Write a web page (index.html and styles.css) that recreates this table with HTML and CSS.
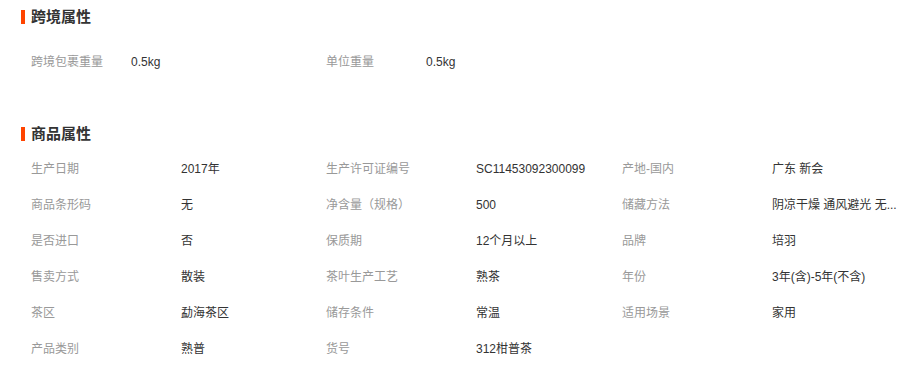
FILE: index.html
```html
<!DOCTYPE html>
<html lang="zh-CN">
<head>
<meta charset="utf-8">
<link rel="stylesheet" href="styles.css">
</head>
<body>
<div class="page">
  <section class="sec sec-cross">
    <h3 class="sec-title"><span class="bar"></span>跨境属性</h3>
    <div class="cross-row">
      <span class="c-label">跨境包裹重量</span>
      <span class="c-value c-value-wide">0.5kg</span>
      <span class="c-label">单位重量</span>
      <span class="c-value">0.5kg</span>
    </div>
  </section>
  <section class="sec sec-goods">
    <h3 class="sec-title"><span class="bar"></span>商品属性</h3>
    <div class="attr-grid">
      <span class="label">生产日期</span><span class="value">2017年</span>
      <span class="label">生产许可证编号</span><span class="value">SC11453092300099</span>
      <span class="label">产地-国内</span><span class="value">广东 新会</span>

      <span class="label">商品条形码</span><span class="value">无</span>
      <span class="label">净含量（规格）</span><span class="value">500</span>
      <span class="label">储藏方法</span><span class="value">阴凉干燥 通风避光 无...</span>

      <span class="label">是否进口</span><span class="value">否</span>
      <span class="label">保质期</span><span class="value">12个月以上</span>
      <span class="label">品牌</span><span class="value">培羽</span>

      <span class="label">售卖方式</span><span class="value">散装</span>
      <span class="label">茶叶生产工艺</span><span class="value">熟茶</span>
      <span class="label">年份</span><span class="value">3年(含)-5年(不含)</span>

      <span class="label">茶区</span><span class="value">勐海茶区</span>
      <span class="label">储存条件</span><span class="value">常温</span>
      <span class="label">适用场景</span><span class="value">家用</span>

      <span class="label">产品类别</span><span class="value">熟普</span>
      <span class="label">货号</span><span class="value">312柑普茶</span>
    </div>
  </section>
</div>
</body>
</html>
```
FILE: styles.css
```css
html, body {
  margin: 0;
  padding: 0;
  background: #fff;
}
body {
  font-family: "Liberation Sans", "Noto Sans CJK SC", sans-serif;
  font-size: 12px;
  color: #333;
  width: 904px;
  height: 366px;
  overflow: hidden;
}
.page {
  padding-left: 21px;
}
.sec-title {
  display: flex;
  align-items: center;
  margin: 0;
  height: 20px;
  line-height: 20px;
  font-size: 15px;
  font-weight: bold;
  color: #333;
}
.bar {
  display: inline-block;
  width: 4px;
  height: 14px;
  background: #ff4400;
  margin-right: 6px;
}
.sec-cross {
  padding-top: 7px;
}
.cross-row {
  display: flex;
  margin-top: 17px;
  padding-left: 10px;
  height: 36px;
  line-height: 36px;
}
.c-label {
  width: 100px;
  color: #999;
}
.c-value {
  width: 100px;
  color: #333;
}
.c-value-wide {
  width: 195px;
}
.sec-goods {
  margin-top: 44px;
}
.sec-goods .sec-title {
  margin-bottom: 7px;
}
.attr-grid {
  display: grid;
  grid-template-columns: 150px 145px 150px 146px 150px 130px;
  grid-auto-rows: 36px;
  padding-left: 10px;
  line-height: 36px;
}
.label {
  color: #999;
  white-space: nowrap;
}
.value {
  color: #333;
  white-space: nowrap;
}
```
